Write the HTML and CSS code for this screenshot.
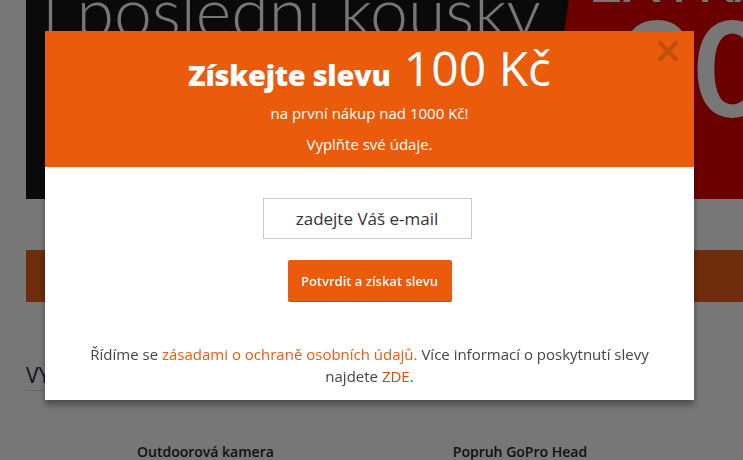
FILE: index.html
```html
<!DOCTYPE html>
<html>
<head>
    <meta charset="UTF-8">
    <meta name="viewport" content="width=device-width, initial-scale=1" />
    <title>Sleva 100 Kč</title>
    <link rel="stylesheet" href="styles.css">
</head>
<body>

<div id="page">
    <div class="banner">
        <div class="bannerText">l poslední kousky</div>
        <div class="bannerRed">
            <div class="extra">EXTRA</div>
            <div class="big">30</div>
        </div>
    </div>
    <div class="strip"></div>
    <h2 class="section">VYBRANÉ PRODUKTY</h2>
    <div class="products">
        <div class="product">Outdoorová kamera</div>
        <div class="product">Popruh GoPro Head</div>
    </div>
</div>

<div id="overlay">
    <div class="modal">
        <div class="modalHead">
            <span class="close">
                <svg width="22" height="22" viewBox="0 0 22 22">
                    <path d="M3 3 L19 19 M19 3 L3 19" stroke="#bd4d0b" stroke-width="4" stroke-linecap="round" fill="none"/>
                </svg>
            </span>
            <h1><b>Získejte slevu</b> <span class="amount">100 Kč</span></h1>
            <p>na první nákup nad 1000 Kč!</p>
            <p>Vyplňte své údaje.</p>
        </div>
        <div class="modalBody">
            <form id="subscribe">
                <input type="text" id="email" name="email" placeholder="zadejte Váš e-mail" />
                <button type="button" id="confirm">Potvrdit a získat slevu</button>
            </form>
            <p class="note">Řídíme se <a href="#">zásadami o ochraně osobních údajů.</a> Více informací o poskytnutí slevy najdete <a href="#" class="dark">ZDE</a>.</p>
        </div>
    </div>
</div>

</body>
</html>
```

FILE: styles.css
```css
html {
    font-family: "Open Sans", "Noto Sans", sans-serif;
}

body {
    margin: 0;
    background-color: #eeeeee;
    overflow: hidden;
}

#page {
    padding-left: 26px;
}

.banner {
    height: 199px;
    background-color: #141414;
    display: flex;
    overflow: hidden;
}

.bannerText {
    color: #eeeeee;
    font-family: Lato, sans-serif;
    font-size: 68px;
    font-weight: 300;
    line-height: 68px;
    margin-top: -23px;
    margin-left: 17px;
    width: 526px;
    white-space: nowrap;
}

.bannerRed {
    flex: 1;
    background-color: #d60000;
    clip-path: polygon(28px 0, 100% 0, 100% 100%, 0 100%);
    padding-left: 47px;
    white-space: nowrap;
}

.extra {
    color: #eeeeee;
    font-family: Lato, sans-serif;
    font-size: 60px;
    line-height: 60px;
    margin-top: -51px;
}

.big {
    color: #eeeeee;
    font-family: Lato, sans-serif;
    font-size: 132px;
    font-weight: bold;
    line-height: 110px;
    margin-top: 2px;
    margin-left: 30px;
}

.strip {
    height: 52px;
    margin-top: 51px;
    background-color: #dc5818;
}

.section {
    margin: 60px 0 0;
    font-size: 21px;
    font-weight: normal;
    color: #1e2840;
    line-height: 26px;
    padding-bottom: 2px;
    border-bottom: 1px solid #cccccc;
    white-space: nowrap;
    width: 320px;
}

.products {
    display: flex;
    margin-top: 51px;
    padding-left: 111px;
    gap: 179px;
}

.product {
    font-size: 14px;
    font-weight: 600;
    color: #222222;
}

#overlay {
    position: fixed;
    top: 0;
    left: 0;
    right: 0;
    bottom: 0;
    background-color: rgba(0, 0, 0, .5);
}

.modal {
    margin: 31px 0 0 45px;
    width: 649px;
    background-color: #ffffff;
    box-shadow: 0 5px 6px rgba(0, 0, 0, .35);
    text-align: center;
}

.modalHead {
    position: relative;
    background-color: #ea5b0c;
    color: #ffffff;
    height: 136px;
    padding-top: 14px;
    box-sizing: border-box;
}

.close {
    position: absolute;
    top: 9px;
    right: 15px;
    opacity: .9;
}

.modalHead h1 {
    margin: 0;
    font-size: 29px;
    line-height: 46px;
    letter-spacing: -0.3px;
}

.modalHead h1 .amount {
    font-size: 48px;
    font-weight: normal;
    margin-left: 6px;
    letter-spacing: 0;
}

.modalHead p {
    margin: 3px 0 0;
    font-size: 15px;
    line-height: 24px;
    font-weight: 500;
}

.modalHead p + p {
    margin-top: 7px;
}

.modalBody {
    padding: 31px 36px 13px;
}

form {
    display: flex;
    flex-direction: column;
    align-items: center;
}

#email {
    width: 209px;
    height: 41px;
    box-sizing: border-box;
    border: 1px solid #c8c8c8;
    font-family: "Open Sans", sans-serif;
    font-size: 17px;
    text-align: center;
    margin-left: -5px;
}

#email::placeholder {
    color: #333333;
}

#confirm {
    margin-top: 21px;
    width: 164px;
    height: 42px;
    border: 0;
    border-bottom: 1px solid #c94c08;
    border-radius: 2px;
    background-color: #ea5b0c;
    color: #ffffff;
    font-family: "Open Sans", sans-serif;
    font-size: 13px;
    font-weight: 600;
}

.note {
    margin: 41px 0 0;
    font-size: 15px;
    line-height: 22px;
    color: #444444;
}

.note a {
    color: #ea5b0c;
    text-decoration: none;
}

.note a.dark {
    color: #c8500e;
}
```
